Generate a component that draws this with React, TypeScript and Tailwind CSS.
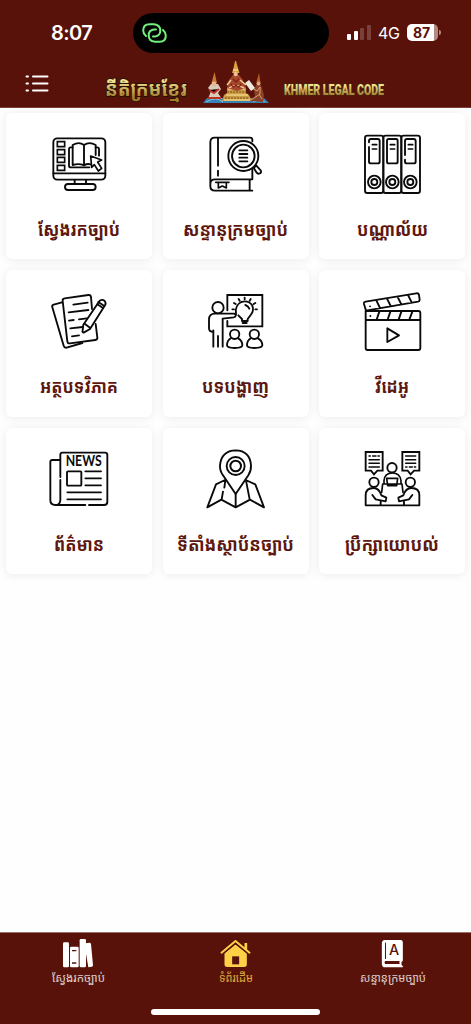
import type { ReactNode } from "react";

const KHMER_FONT = "font-['Noto_Sans_Khmer','Khmer_OS','Noto_Sans',sans-serif]";

interface IconProps {
  viewBox: string;
  children: ReactNode;
}

function LineIcon({ viewBox, children }: IconProps) {
  return (
    <svg
      viewBox={viewBox}
      className="h-[60px] w-[60px] shrink-0"
      fill="none"
      stroke="#0a0a0a"
      strokeWidth="5.6"
      strokeLinecap="round"
      strokeLinejoin="round"
    >
      {children}
    </svg>
  );
}

function SearchLawIcon() {
  return (
    <LineIcon viewBox="147 87 180 180">
      <rect x="160" y="100" width="156" height="124" rx="12" />
      <path d="M160 205H316M224 225V237M258 225V237" />
      <rect x="195" y="237" width="92" height="18" rx="9" />
      <path d="M172 110h22v15h-22zM172 134h22v15h-22zM172 157h22v15h-22zM172 181h22v15h-22z" strokeLinejoin="miter" strokeWidth="5" />
      <path d="M218 127H212Q207 127 207 133V182Q207 187 213 187H268M287 127H292Q297 127 297 133V152" />
      <path d="M218 180V120Q237 109 252 120Q268 109 287 120V150M252 120V181M218 180Q237 174 252 181Q262 175 272 178" />
      <path d="M272 153L305 165L293 171L305 190L295 198L283 179L275 187Z" fill="#fff" strokeWidth="5" />
    </LineIcon>
  );
}

function DictionaryIcon() {
  return (
    <LineIcon viewBox="147 87 180 180">
      <path d="M286 109V104Q286 98 279 98H173Q160 98 160 112V244Q160 257 174 257H286M286 192V223H174Q160 223 160 237M183 99V182M183 197V212M278 225V256" />
      <path d="M176 232H216M184 233V249L196 243L208 249V233" strokeWidth="5" />
      <circle cx="259" cy="153" r="45" fill="#fff" />
      <circle cx="259" cy="153" r="34" />
      <path d="M247 136H271M247 147H271M247 158H271M247 169H271" />
      <path d="M290 188L298 182L311 196Q315 204 306 206Q302 207 299 203Z" fill="#fff" />
    </LineIcon>
  );
}

function LibraryIcon() {
  const columns = [190, 244, 298];
  return (
    <LineIcon viewBox="153 87 180 180">
      <rect x="162" y="92" width="55" height="172" rx="7" />
      <rect x="217" y="92" width="54" height="172" rx="7" />
      <rect x="271" y="92" width="56" height="172" rx="7" />
      {columns.map((x) => (
        <g key={x}>
          <circle cx={x} cy="231" r="19" />
          <circle cx={x} cy="231" r="9" />
          <path d={`M${x - 6} 119H${x + 7}M${x - 6} 132H${x + 7}`} strokeWidth="5" />
        </g>
      ))}
      <path d="M174 112V108Q174 102 180 102H200Q206 102 206 108V170Q206 175 200 175H180Q174 175 174 170V126" />
      <rect x="228" y="102" width="32" height="73" rx="5" />
      <path d="M282 150V108Q282 102 288 102H308Q314 102 314 108V170Q314 175 308 175H288Q282 175 282 170V164" />
    </LineIcon>
  );
}

function ArticleIcon() {
  return (
    <LineIcon viewBox="147 78 180 180">
      <path d="M186 112L161 119Q155 121 157 127L191 242Q193 249 200 248L247 234" />
      <path d="M276 132L273 96Q272 89 265 90L194 100Q187 101 188 108L202 229Q203 236 210 235L286 225Q293 224 292 217L287 177" />
      <path d="M220 119L263 113M206 142L265 135M207 167L221 165M237 163L260 160M211 190L248 186M216 214L237 211" />
      <path d="M299 107Q307 102 314 108Q319 114 315 121L270 192L251 203Q246 201 248 196L250 179Z" fill="#fff" />
      <path d="M292 118L309 129M255 177L270 188M295 111L313 123" />
    </LineIcon>
  );
}

function PresentationIcon() {
  return (
    <LineIcon viewBox="147 78 180 180">
      <path d="M211 136V90H316V184H211V168" strokeLinejoin="miter" />
      <circle cx="183" cy="128" r="17" />
      <path d="M169 245V201Q156 201 156 190V164Q156 146 174 146H230Q237 147 236 152Q235 156 230 157L197 161V245M169 201V196M183 213V245" />
      <path d="M237 149Q232 121 253 111Q273 105 285 120Q293 136 281 150L272 162V168H255V162L244 151M257 174H269" />
      <path d="M265 120Q274 123 277 131" />
      <path d="M263 98V103M245 102L248 107M281 102L278 107M231 114L236 117M295 114L290 117M226 133H231M295 133H300" />
      <circle cx="233" cy="208" r="14" />
      <circle cx="292" cy="208" r="14" />
      <path d="M221 220Q210 227 210 241Q210 249 233 249Q256 249 256 241Q256 227 244 220M281 220Q270 227 270 241Q270 249 292 249Q316 249 316 241Q316 227 303 220" />
    </LineIcon>
  );
}

function VideoIcon() {
  return (
    <LineIcon viewBox="153 78 180 180">
      <path d="M164 138H322Q328 138 328 144V249Q328 255 322 255H170Q164 255 164 249V138ZM164 165H328M205 140L197 164M238 140L230 164M271 140L263 164M304 140L295 164" />
      <path d="M165 137L159 117Q158 111 164 110L316 85Q323 84 324 90L326 104Q326 109 321 110L165 137ZM196 106L207 129M228 101L239 123M260 96L271 118M291 90L302 112" />
      <path d="M229 190V231L264 211Z" />
      <path d="M177 124h0.1M178 153h0.1" />
    </LineIcon>
  );
}

function NewsIcon() {
  return (
    <LineIcon viewBox="147 81 180 180">
      <path d="M181 165V98Q181 92 187 92H315Q322 92 322 99V240Q322 249 312 249H267M256 249H166Q151 249 151 234V120Q151 114 157 114H180M181 174V233Q181 249 166 249" />
      <rect x="201" y="148" width="43" height="43" rx="3" />
      <path d="M256 148H303M256 169H303M256 190H303M202 211H303M202 232H303" />
      <text x="197" y="133" textLength="108" lengthAdjust="spacingAndGlyphs" fill="#0a0a0a" stroke="none" className="font-['Lato',sans-serif] text-[43px] font-bold">
        NEWS
      </text>
    </LineIcon>
  );
}

function MapIcon() {
  return (
    <LineIcon viewBox="147 81 180 180">
      <path d="M236 216L198 160Q188 146 189 130Q193 86 236 85Q279 86 282 130Q283 146 274 160Z" />
      <circle cx="236" cy="132" r="27" />
      <circle cx="236" cy="132" r="16" strokeWidth="6" />
      <path d="M204 174L177 187L151 256L193 233L236 256L279 233L321 256L295 187L266 174M236 217V255M205 176L202 197M198 209L194 232M267 176L278 232" />
    </LineIcon>
  );
}

function ConsultIcon() {
  return (
    <LineIcon viewBox="153 81 180 180">
      <path d="M164 90H215V146H199L189 157L180 146H164ZM274 90H325V146H309L299 157L290 146H274Z" strokeLinejoin="miter" />
      <path d="M174 102H178M185 102H195M201 102H205M174 113H205M174 124H205M174 135H205M284 102H314M284 113H314M284 124H314M284 135H288M295 135H304M310 135H314" strokeWidth="4.4" />
      <circle cx="243" cy="137" r="14" />
      <circle cx="189" cy="181" r="14" />
      <circle cx="298" cy="181" r="14" />
      <path d="M219 185V176Q221 153 244 153Q267 153 270 176V185M227 169H260L257 191H230ZM215 186H273M215 186L212 211M273 186L276 211" strokeWidth="5" />
      <path d="M164 250V220Q164 198 188 198Q204 198 211 220L226 227L224 238L194 232L184 219M325 250V220Q325 198 301 198Q284 198 277 220L262 227L264 238L294 232L304 219M209 235V250M279 235V250M164 250H325" />
    </LineIcon>
  );
}

const tiles = [
  { label: "ស្វែងរកច្បាប់", icon: <SearchLawIcon />, width: 82 },
  { label: "សន្ទានុក្រមច្បាប់", icon: <DictionaryIcon />, width: 105 },
  { label: "បណ្ណាល័យ", icon: <LibraryIcon />, width: 71 },
  { label: "អត្ថបទវិភាគ", icon: <ArticleIcon />, width: 78 },
  { label: "បទបង្ហាញ", icon: <PresentationIcon />, width: 67 },
  { label: "វីដេអូ", icon: <VideoIcon />, width: 34 },
  { label: "ព័ត៌មាន", icon: <NewsIcon />, width: 50 },
  { label: "ទីតាំងស្ថាប័នច្បាប់", icon: <MapIcon />, width: 117 },
  { label: "ប្រឹក្សាយោបល់", icon: <ConsultIcon />, width: 94 },
];

function Emblem() {
  return (
    <svg viewBox="203 60 67 44" className="h-11 w-[67px]">
      <path d="M203 103L207 98H264L269 103Z" fill="#3584b5" />
      <path d="M206 102Q216 96 223 102M253 102Q261 98 265 102" stroke="#7fc5df" fill="none" />
      <path d="M222 101L224 95L227 93V87H246V93L249 95L252 101Z" fill="#c99b43" />
      <path d="M224 100H250M226 95H248M228 89H245" stroke="#eed184" strokeWidth="1.5" />
      <path d="M225 98H249M227 92H246" stroke="#81501f" strokeDasharray="2 1" />
      <path d="M227 88L229 80L233 75H239L243 80L246 88L237 91Z" fill="#a6482d" />
      <path d="M229 88Q236 83 244 88M231 80L227 85M240 80L246 85" stroke="#f0ce97" fill="none" strokeWidth="1.5" />
      <path d="M232 73L233.5 68L235 61H236L238 68L239.5 73Z" fill="#dba23f" />
      <path d="M233 70H238" stroke="#fff0bd" />
      <circle cx="235.7" cy="74" r="2.2" fill="#efc296" />
      <path d="M231 84Q233 89 236 85Q239 89 241 84M233 79L236 82L239 79" stroke="#801f12" fill="none" strokeWidth="1.3" />
      <path d="M208 99L211 91L208 88L211 84L218 84L221 89L218 93L222 99Z" fill="#d9cab9" />
      <path d="M211.5 83L214.5 72L217 83Z" fill="#c67934" />
      <circle cx="214" cy="84" r="2.4" fill="#eab691" />
      <path d="M209 90L214 93L219 89M208 98L221 98" stroke="#bc3428" strokeWidth="2" />
      <path d="M250 101L255 96L254 90L256 85L261 85L264 95L263 102Z" fill="#8b402c" />
      <path d="M256.5 82L259 73L260.5 83Z" fill="#bb5f29" />
      <circle cx="258.5" cy="83.5" r="2" fill="#e4ab7f" />
      <path d="M252 88L257 91L260 87L260 94L251 100M259 94L262 99" stroke="#d8a162" fill="none" />
      <path d="M245 83L249 80L255 88L251 91Z" fill="#eee8dd" />
    </svg>
  );
}

function StatusBar() {
  return (
    <div className="flex h-[60px] items-start font-['Inter',sans-serif] text-white">
      <div className="flex h-[65px] w-[133px] items-center pl-[51px] text-[20px] font-semibold tracking-[-0.6px]">8:07</div>
      <div className="mt-[13px] flex h-10 w-[196px] items-center rounded-full bg-black pl-[9px]">
        <svg viewBox="0 0 25 20" className="h-5 w-[25px]" fill="none" stroke="#73ef7d" strokeWidth="2" strokeLinecap="round">
          <path d="M4 13Q1.2 10.5 1.2 7.5Q1.2 1.2 7.5 1.2H12Q18.3 2 18.3 7.5Q18.3 13 13 13.5H11" />
          <path d="M21 7Q23.8 9.5 23.8 12.5Q23.8 18.8 17.5 18.8H13Q6.7 18 6.7 12.5Q6.7 7 12 6.5H14" />
        </svg>
      </div>
      <div className="flex h-[65px] items-center pl-[18px]">
        <div className="flex h-[15px] items-end gap-[2.7px]">
          <div className="h-[6px] w-1 rounded-[1px] bg-white" />
          <div className="h-[9px] w-1 rounded-[1px] bg-white" />
          <div className="h-3 w-1 rounded-[1px] bg-white/20" />
          <div className="h-[15px] w-1 rounded-[1px] bg-white/20" />
        </div>
        <div className="ml-[7px] w-[22px] text-[16px] tracking-[-0.5px]">4G</div>
        <div className="ml-[7px] flex h-[17px] w-[31px] items-center justify-center rounded-[5px] bg-linear-to-r from-white from-86% to-[#b18a84] to-86% pr-[2px] text-[14px] leading-[17px] font-bold text-[#581209]">
          87
        </div>
        <div className="ml-px h-[5px] w-[2px] rounded-r-full bg-[#b18a84]" />
      </div>
    </div>
  );
}

function Header() {
  return (
    <header className="h-[108px] shrink-0 border-b border-[#7c4038] bg-[#581209]">
      <StatusBar />
      <div className="flex h-11 items-start">
        <svg viewBox="0 0 24 18" className="mt-[14px] ml-[25px] h-[18px] w-6" stroke="white" strokeWidth="2" strokeLinecap="round">
          <path d="M1.5 2.5H3M8 2.5H22.5M1.5 9.5H3M8 9.5H22.5M1.5 16.5H3M8 16.5H22.5" />
        </svg>
        <svg className="mt-3 ml-[56px] h-8 w-[82px] overflow-visible">
          <defs>
            <linearGradient id="gold" x1="0" y1="0" x2="0" y2="1">
              <stop offset="0.25" stopColor="#f3e290" />
              <stop offset="0.8" stopColor="#a37c2c" />
            </linearGradient>
          </defs>
          <text x="0" y="24" textLength="82" lengthAdjust="spacingAndGlyphs" fill="url(#gold)" stroke="#241105" strokeWidth="1.8" paintOrder="stroke" className={`${KHMER_FONT} text-[21px] font-bold`}>
            នីតិក្រមខ្មែរ
          </text>
        </svg>
        <div className="ml-4">
          <Emblem />
        </div>
        <svg className="mt-5 ml-[14px] h-5 w-[101px] overflow-visible">
          <text x="0" y="15" textLength="100" lengthAdjust="spacingAndGlyphs" fill="url(#gold)" stroke="#40300f" strokeWidth="1.2" paintOrder="stroke" className="font-['Roboto',sans-serif] text-[15px] font-black">
            KHMER LEGAL CODE
          </text>
        </svg>
      </div>
    </header>
  );
}

const navItems = [
  {
    label: "ស្វែងរកច្បាប់",
    width: 53,
    color: "text-white",
    icon: (
      <svg viewBox="186 44 96 87" className="h-[29px] w-8" fill="currentColor">
        <rect x="189" y="54" width="18" height="75" rx="4" />
        <rect x="210" y="67" width="26" height="62" rx="4" />
        <rect x="239" y="44" width="19" height="85" rx="4" />
        <path d="M257 57L269 55Q272 55 273 59L279 123Q279 127 275 127L265 129L257 82Z" />
        <path d="M216 79H229M216 116H229" stroke="#581209" strokeWidth="4" />
      </svg>
    ),
  },
  {
    label: "ទំព័រដើម",
    width: 34,
    color: "text-[#ffd147]",
    icon: (
      <svg viewBox="660 44 92 87" className="h-[29px] w-[31px]" fill="none" stroke="currentColor" strokeWidth="6" strokeLinecap="round" strokeLinejoin="round">
        <path d="M664 85L706 50L748 85" />
        <path d="M737 76V56" strokeWidth="8" strokeLinecap="butt" />
        <path d="M676 88L706 64L737 88V120Q737 125 732 125H681Q676 125 676 120Z" fill="currentColor" />
        <path d="M669 89L706 58L743 89" stroke="#581209" strokeWidth="3" />
        <path d="M696 96H717V120H696Z" fill="#581209" stroke="none" />
      </svg>
    ),
  },
  {
    label: "សន្ទានុក្រមច្បាប់",
    width: 66,
    color: "text-white",
    icon: (
      <svg viewBox="1143 44 68 87" className="h-[29px] w-[23px]">
        <path d="M1154 47H1201Q1208 47 1208 54V109L1204 113V122L1208 125V129H1155Q1145 129 1145 118V58Q1145 47 1154 47Z" fill="currentColor" />
        <path d="M1156 55V104" stroke="#581209" strokeWidth="3" />
        <path d="M1155 110H1198V119H1155Q1151 115 1155 110Z" fill="#581209" />
        <text x="1182" y="93" textAnchor="middle" fill="#581209" className="font-['Inter',sans-serif] text-[43px] font-medium">A</text>
      </svg>
    ),
  },
];

function BottomNav() {
  return (
    <nav className="mt-auto flex h-[92px] shrink-0 flex-col items-center border-t border-[#9b706b] bg-[#581209]">
      <div className="grid h-[76px] w-full grid-cols-3 pt-[6px]">
        {navItems.map((item) => (
          <div key={item.label} className={`flex flex-col items-center first:pr-px ${item.color}`}>
            {item.icon}
            <svg className="h-6 overflow-visible opacity-80" style={{ width: item.width }}>
              <text x="0" y="14" textLength={item.width} lengthAdjust="spacingAndGlyphs" fill="currentColor" className={`${KHMER_FONT} text-[12px]`}>
                {item.label}
              </text>
            </svg>
          </div>
        ))}
      </div>
      <div className="h-[6px] w-[169px] rounded-full bg-white" />
    </nav>
  );
}

export default function App() {
  return (
    <div className="flex h-screen w-full flex-col overflow-hidden bg-[#fefefe]">
      <Header />
      <main className="grid grid-cols-3 gap-x-[10.5px] gap-y-[11px] px-[6px] pt-[5px]">
        {tiles.map((tile) => (
          <div
            key={tile.label}
            className="flex h-[146.4px] flex-col items-center rounded-[6px] bg-white pt-[21px] shadow-[0_1px_10px_rgba(0,0,0,0.08)]"
          >
            {tile.icon}
            <svg className="mt-[18px] h-9 overflow-visible" style={{ width: tile.width }}>
              <text x="0" y="24" textLength={tile.width} lengthAdjust="spacingAndGlyphs" fill="#5d170e" className={`${KHMER_FONT} text-[18.5px] font-bold`}>
                {tile.label}
              </text>
            </svg>
          </div>
        ))}
      </main>
      <BottomNav />
    </div>
  );
}
